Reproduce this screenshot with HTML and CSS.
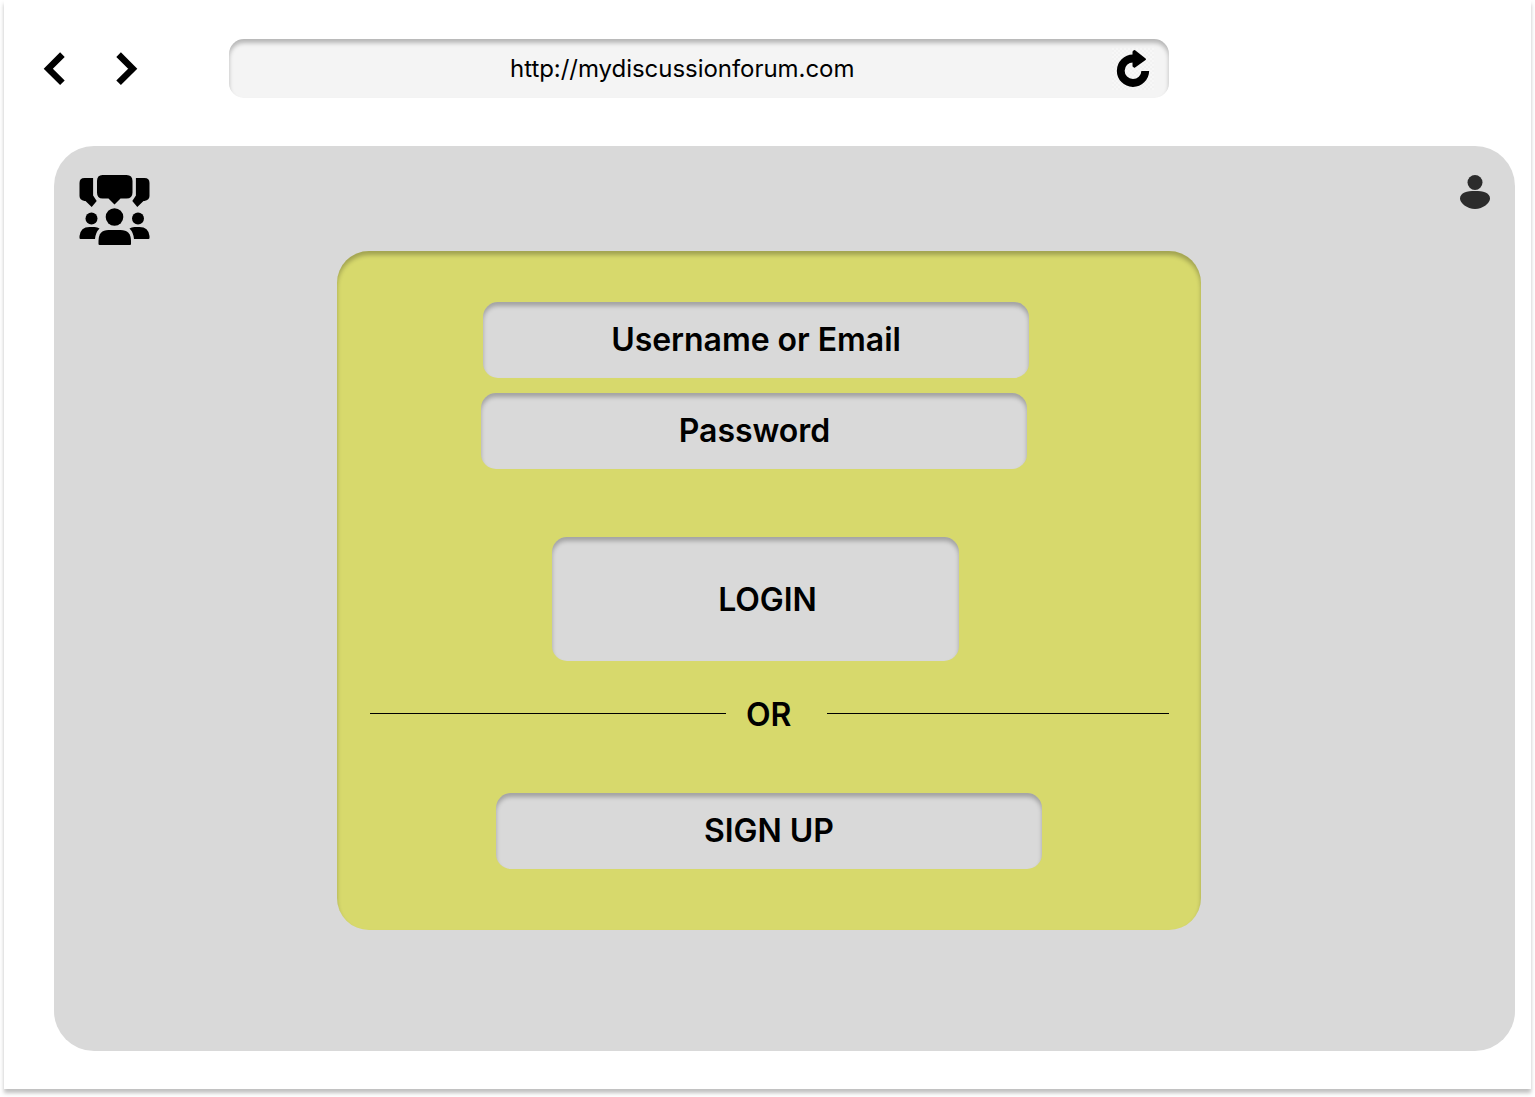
FILE: index.html
```html
<!DOCTYPE html>
<html lang="en">
<head>
<meta charset="utf-8">
<title>My Discussion Forum</title>
<link rel="stylesheet" href="styles.css">
</head>
<body>
<div class="window">
  <header class="toolbar">
    <nav class="nav">
      <svg class="arrow" viewBox="0 0 24 34"><path d="M20.400 2.600 6.300 16.700 20.400 30.800" /></svg>
      <svg class="arrow" viewBox="0 0 24 34"><path d="M3.600 2.600 17.700 16.700 3.600 30.800" /></svg>
    </nav>
    <div class="address">
      <span class="url">http://mydiscussionforum.com</span>
      <span class="reload">
        <svg viewBox="0 0 42 42"><path class="ring" d="M21 10.500A12.250 12.250 0 1 0 33.250 23"/><path class="tip" d="M21.500 4 22.500 3 33 11.200 22.500 18.800 21.500 18Z"/></svg>
      </span>
    </div>
  </header>
  <main class="page">
    <svg class="logo" viewBox="0 0 70 70">
      <path d="M5 3h8.600v17.500l3.600 5.500-5 6-6.200-6H5q-5-1-5-5V8q0-5 5-5Z"/>
      <path d="M65 3h-8.600v17.500L52.800 26l5 6 6.200-6h1q5-1 5-5V8q0-5-5-5Z"/>
      <path d="M23 0h24q6 0 6 6v11.500q0 6-6 6h-6L35 29.500l-6-6h-6q-5.500 0-5.500-6V6q0-6 5.500-6Z"/>
      <circle cx="35" cy="42" r="8.800"/>
      <circle cx="12" cy="43.500" r="6"/>
      <circle cx="58.500" cy="43.500" r="6"/>
      <path d="M1 64Q0 64 0 63V61q1-9 10-9h5q3 0 5 1.500-4 4-4.500 10.500Z"/>
      <path d="M69 64Q70 64 70 63V61q-1-9-10-9h-5q-3 0-5 1.500 4 4 4.500 10.500Z"/>
      <path d="M20 70q-1 0-1-1v-3q0-11 10-11h12q10.500 0 10.500 11v3q0 1-1 1Z"/>
    </svg>
    <form class="card">
      <div class="box username">Username or Email</div>
      <div class="box password">Password</div>
      <div class="box login">LOGIN</div>
      <div class="divider"><i class="line left"></i><span class="or">OR</span><i class="line right"></i></div>
      <div class="box signup">SIGN UP</div>
    </form>
    <svg class="user" viewBox="0 0 30 34">
      <circle cx="15" cy="7.500" r="7.500"/>
      <path d="M0 23.500C0 17.800 7 16 15 16s15 1.800 15 7.500C30 28 23 34 15 34S0 28 0 23.500Z"/>
    </svg>
  </main>
</div>
</body>
</html>
```
FILE: styles.css
```css
* { box-sizing: border-box; }
body {
  margin: 0;
  height: 1097px;
  overflow: hidden;
  background: #fff;
  font-family: Inter, "Liberation Sans", sans-serif;
  color: #000;
}
.window {
  width: 1527px;
  height: 1089px;
  margin-left: 4px;
  padding: 39px 16px 0 38px;
  background: #fff;
  box-shadow: 0 4px 4px rgba(0, 0, 0, .25);
}
.toolbar { display: flex; align-items: center; height: 59px; }
.nav { display: flex; gap: 49px; width: 187px; }
.arrow { width: 24px; height: 34px; fill: none; stroke: #000; stroke-width: 6.500; }
.address {
  display: flex;
  align-items: center;
  justify-content: space-between;
  width: 940px;
  height: 59px;
  padding: 0 15px 0 281px;
  border-radius: 15px;
  background: #f4f4f4;
  box-shadow: inset 0 4px 4px rgba(0, 0, 0, .25);
}
.url { font-size: 24px; line-height: 30px; letter-spacing: -.04px; white-space: nowrap; }
.reload {
  width: 42px;
  height: 42px;
  background: repeating-conic-gradient(#f2f2f2 0 25%, #f7f7f7 0 50%) 0 0 / 4px 4px;
}
.reload svg { display: block; width: 42px; height: 42px; }
.ring { fill: none; stroke: #000; stroke-width: 7.800; }
.tip { stroke: #000; stroke-width: 2; stroke-linejoin: round; }
.page {
  display: flex;
  align-items: flex-start;
  width: 1461px;
  height: 905px;
  margin: 48px 0 0 12px;
  padding: 29px 25px 0;
  border-radius: 40px;
  background: #d9d9d9;
}
.logo { width: 71px; height: 70px; }
.user { width: 30px; height: 34px; margin-left: auto; fill: #2c2c2c; }
.card {
  display: flex;
  flex-direction: column;
  width: 864px;
  height: 679px;
  margin: 76px 0 0 187px;
  padding: 51px 32px 0 33px;
  border-radius: 32px;
  background: #d7d96c;
  box-shadow: inset 0 4px 4px rgba(0, 0, 0, .25);
}
.box {
  display: flex;
  align-items: center;
  justify-content: center;
  width: 546px;
  height: 76px;
  padding-bottom: 2px;
  border-radius: 15px;
  background: #d9d9d9;
  box-shadow: inset 0 4px 4px rgba(0, 0, 0, .25);
  font-size: 32px;
  font-weight: 600;
  line-height: 39px;
  letter-spacing: -.04px;
  white-space: nowrap;
}
.username { margin-left: 113px; }
.password { margin: 15px 0 0 111px; padding-left: 1px; }
.login { width: 407px; height: 124px; margin: 68px 0 0 182px; padding: 0 0 0 24px; }
.divider { display: flex; align-items: center; height: 39px; margin-top: 33px; }
.line { height: 1px; background: #000; }
.left { width: 356px; }
.right { width: 342px; }
.or { width: 101px; padding: 2px 0 0 20px; font-size: 32px; font-weight: 600; line-height: 39px; }
.signup { margin: 60px 0 0 126px; }
```
